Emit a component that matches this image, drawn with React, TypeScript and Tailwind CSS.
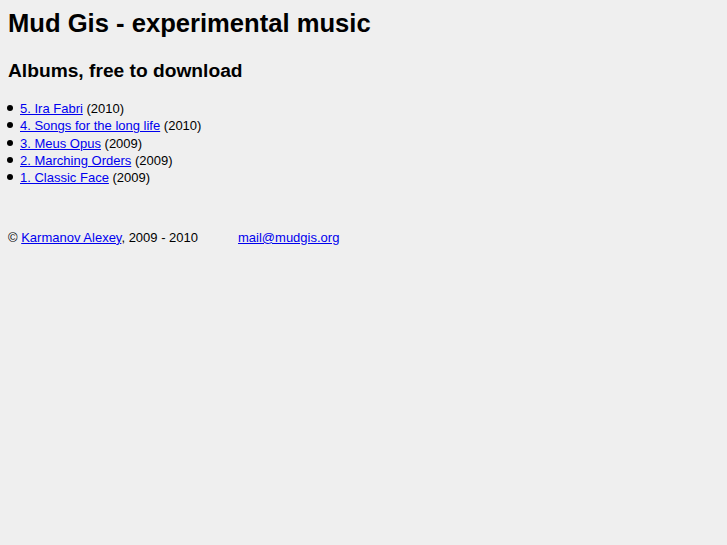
const albums = [
  { title: "5. Ira Fabri", year: 2010 },
  { title: "4. Songs for the long life", year: 2010 },
  { title: "3. Meus Opus", year: 2009 },
  { title: "2. Marching Orders", year: 2009 },
  { title: "1. Classic Face", year: 2009 },
];

const App: React.FC = () => {
  return (
    <div className="min-h-screen w-full bg-[#efefef] text-black px-[8px] pt-[9px] font-['Liberation_Sans',Arial,sans-serif]">
      <h1 className="text-[25.6px] font-bold leading-[normal]">Mud Gis - experimental music</h1>

      <h2 className="mt-[22px] text-[19.2px] font-bold leading-[normal]">Albums, free to download</h2>

      <ul className="mt-[18px] list-none text-[13px] leading-[17.33px]">
        {albums.map((a) => (
          <li key={a.title}>
            <span className="inline-block w-[6px] h-[6px] -ml-[1px] mr-[7px] rounded-full bg-black align-[2px]" />
            <a href="#" className="text-[#0000ee] underline">{a.title}</a> ({a.year})
          </li>
        ))}
      </ul>

      <p className="mt-[43px] text-[13px] leading-[normal]">
        © <a href="#" className="text-[#0000ee] underline">Karmanov Alexey</a>, 2009 - 2010
        <a href="#" className="ml-[40px] text-[#0000ee] underline">mail@mudgis.org</a>
      </p>
    </div>
  );
};

export default App;
